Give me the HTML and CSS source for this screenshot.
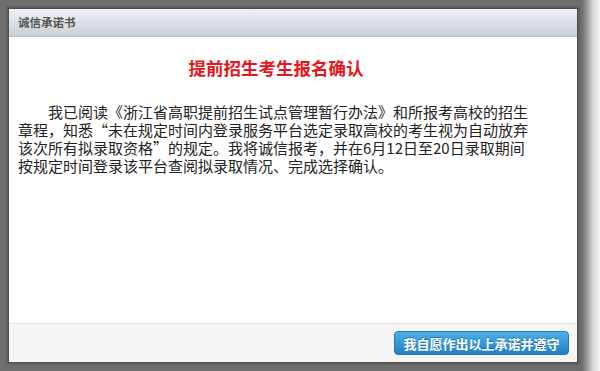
FILE: index.html
```html
<!DOCTYPE html>
<html lang="zh-CN">
<head>
    <meta charset="UTF-8">
    <meta name="viewport" content="width=device-width, initial-scale=1.0">
    <link rel="stylesheet" href="styles.css">
</head>
<body>
    <div class="ventana">
        <div class="ventana-cabecera">诚信承诺书</div>
        <div class="ventana-cuerpo">
            <h1 class="titulo">提前招生考生报名确认</h1>
            <p class="texto">我已阅读《浙江省高职提前招生试点管理暂行办法》和所报考高校的招生章程，知悉“未在规定时间内登录服务平台选定录取高校的考生视为自动放弃该次所有拟录取资格”的规定。我将诚信报考，并在6月12日至20日录取期间按规定时间登录该平台查阅拟录取情况、完成选择确认。</p>
        </div>
        <div class="ventana-pie">
            <button class="btn-acepto">我自愿作出以上承诺并遵守</button>
        </div>
    </div>
</body>
</html>
```

FILE: styles.css
```css
body {
    margin: 0;
    height: 371px;
    overflow: hidden;
    font-family: "Noto Sans CJK SC", "Noto Sans", sans-serif;
    background: linear-gradient(to right, #6e6e6e 0, #6e6e6e 582px, #8e8e8e 586px, #d6d6d6 593px, #f6f6f6 600px);
}

.ventana {
    display: flex;
    flex-direction: column;
    width: 568px;
    height: 353px;
    margin: 9px 0 0 9px;
    background: #fff;
    box-shadow: 0 0 0 1px #4e4e4e, 0 0 0 3px #616161;
}

.ventana-cabecera {
    height: 27px;
    line-height: 27px;
    padding-left: 9px;
    font-size: 11.5px;
    font-weight: bold;
    color: #555;
    background: linear-gradient(to bottom, #eef1f4, #c8d0d7);
    border-bottom: 1px solid #b7c0c8;
}

.ventana-cuerpo {
    flex: 1;
    padding: 20px 0 0 9px;
}

.titulo {
    width: 516px;
    margin: 0;
    text-align: center;
    font-size: 17.5px;
    line-height: 22px;
    color: #e8141b;
}

.texto {
    width: 516px;
    margin: 24px 0 0;
    font-size: 15px;
    line-height: 18px;
    text-indent: 2em;
    color: #222;
}

.ventana-pie {
    display: flex;
    justify-content: flex-end;
    height: 39px;
    padding: 7px 8px 0 0;
    box-sizing: border-box;
    background: #f5f5f5;
    border-top: 1px solid #e2e2e2;
}

.btn-acepto {
    height: 24px;
    width: 175px;
    padding: 0;
    font-family: inherit;
    font-size: 13px;
    font-weight: bold;
    color: #fff;
    text-shadow: 0 -1px 0 rgba(0, 0, 0, 0.3);
    background: linear-gradient(to bottom, #4cb0e8, #1f80c6);
    border: 1px solid #2576b4;
    border-radius: 4px;
    cursor: pointer;
}
```
